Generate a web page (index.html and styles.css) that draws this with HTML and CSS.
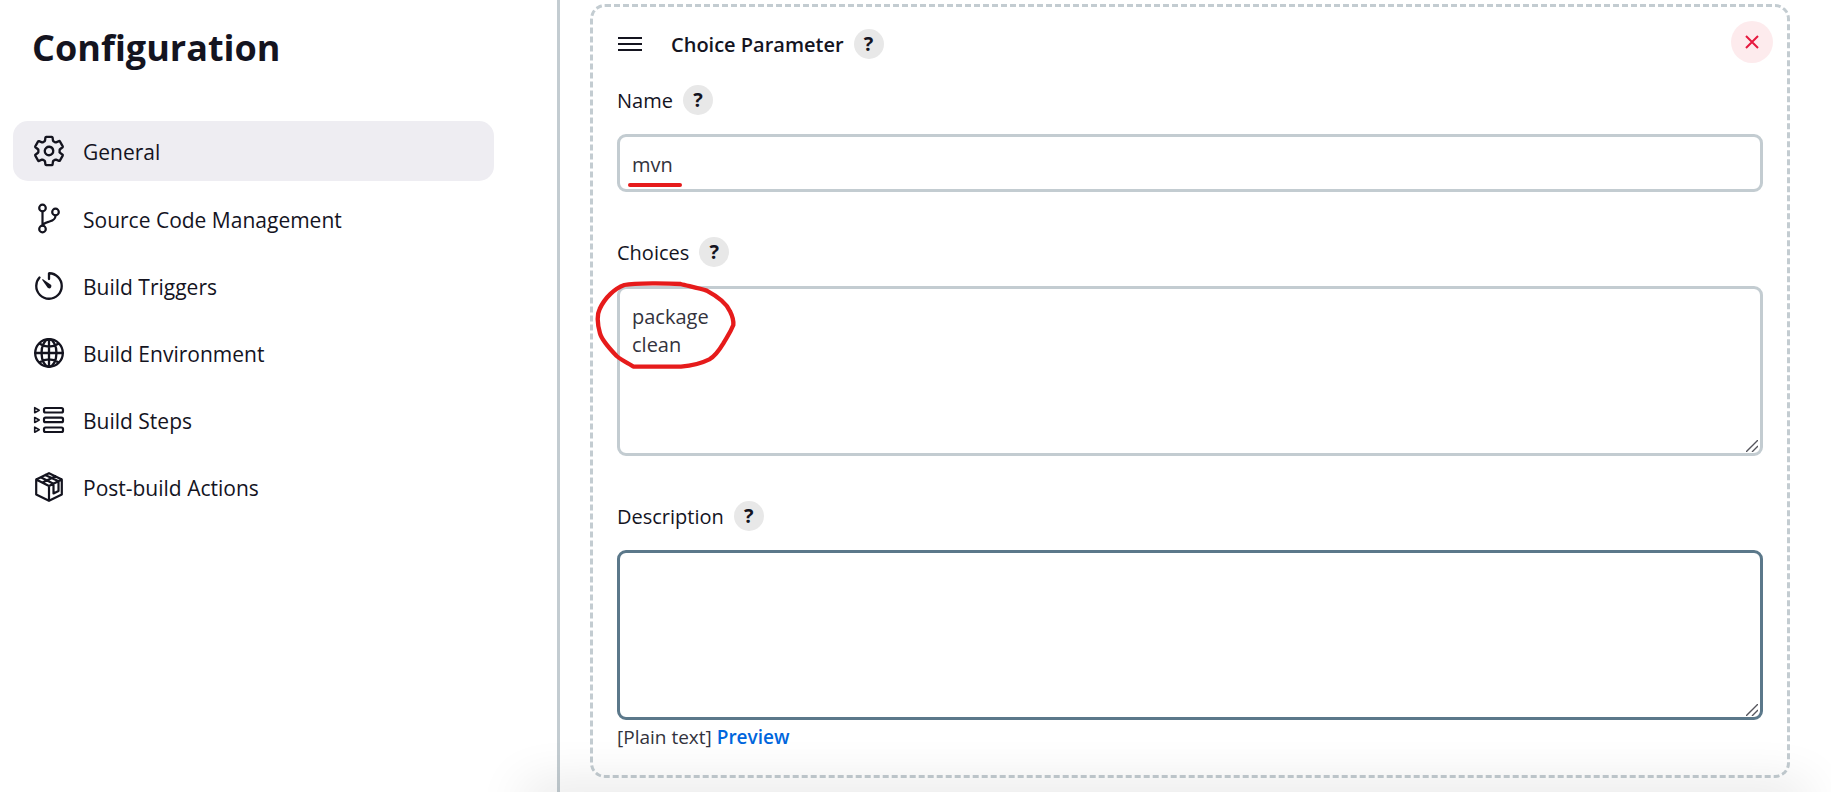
FILE: index.html
```html
<!DOCTYPE html>
<html lang="en">
<head>
<meta charset="utf-8">
<meta name="viewport" content="width=device-width, initial-scale=1">
<title>Configuration</title>
<link rel="stylesheet" href="styles.css">
</head>
<body>
<div class="page">
  <aside class="sidebar">
    <h1 class="sidebar-title">Configuration</h1>
    <nav class="tasks">
      <a class="task task-active" href="#general">
        <svg class="icon" viewBox="0 0 512 512" aria-hidden="true"><path d="M262.29 192.31a64 64 0 1057.4 57.4 64.13 64.13 0 00-57.4-57.4zM416.39 256a154.34 154.34 0 01-1.53 20.79l45.21 35.46a10.81 10.81 0 012.45 13.75l-42.77 74a10.81 10.81 0 01-13.14 4.59l-44.9-18.08a16.11 16.11 0 00-15.17 1.75A164.48 164.48 0 01325 400.8a15.94 15.94 0 00-8.82 12.14l-6.73 47.89a11.08 11.08 0 01-10.68 9.17h-85.54a11.11 11.11 0 01-10.69-8.87l-6.72-47.82a16.07 16.07 0 00-9-12.22 155.3 155.3 0 01-21.46-12.57 16 16 0 00-15.11-1.71l-44.89 18.07a10.81 10.81 0 01-13.14-4.58l-42.77-74a10.8 10.8 0 012.45-13.75l38.21-30a16.05 16.05 0 006-14.08c-.36-4.17-.58-8.33-.58-12.5s.21-8.27.58-12.35a16 16 0 00-6.07-13.94l-38.19-30A10.81 10.81 0 0149.48 186l42.77-74a10.81 10.81 0 0113.14-4.59l44.9 18.08a16.11 16.11 0 0015.17-1.75A164.48 164.48 0 01187 111.2a15.94 15.94 0 008.82-12.14l6.73-47.89A11.08 11.08 0 01213.23 42h85.54a11.11 11.11 0 0110.69 8.87l6.72 47.82a16.07 16.07 0 009 12.22 155.3 155.3 0 0121.46 12.57 16 16 0 0015.11 1.71l44.89-18.07a10.81 10.81 0 0113.14 4.58l42.77 74a10.8 10.8 0 01-2.45 13.75l-38.21 30a16.05 16.05 0 00-6.05 14.08c.33 4.14.55 8.3.55 12.47z"/></svg>
        <span>General</span>
      </a>
      <a class="task" href="#scm">
        <svg class="icon icon-34" viewBox="0 0 34 34" aria-hidden="true"><circle cx="10.5" cy="6" r="3.3"/><circle cx="10.5" cy="27" r="3.3"/><circle cx="23.5" cy="10" r="3.3"/><path d="M10.5 9.5v14M23.5 13.5c0 4-2.500 5-6 6-4 1.200-6.500 1.700-7 4"/></svg>
        <span>Source Code Management</span>
      </a>
      <a class="task" href="#triggers">
        <svg class="icon" viewBox="0 0 512 512" aria-hidden="true"><path d="M112.91 128A191.85 191.85 0 0064 254c-1.180 106.350 85.650 193.800 192 194 106.200.2 192-85.830 192-192 0-104.540-83.550-189.610-187.500-192a4.360 4.360 0 00-4.500 4.370V152"/><path class="solid" d="M233.38 278.63l-79-113a8.13 8.13 0 0111.32-11.32l113 79a32.5 32.5 0 01-37.25 53.26 33.21 33.21 0 01-8.07-7.94z"/></svg>
        <span>Build Triggers</span>
      </a>
      <a class="task" href="#environment">
        <svg class="icon" viewBox="0 0 512 512" aria-hidden="true"><circle cx="256" cy="256" r="208"/><path d="M256 48c-58.070 0-112.670 93.130-112.670 208S197.930 464 256 464s112.670-93.130 112.670-208S314.070 48 256 48zM117.330 117.330c38.240 27.150 86.380 43.340 138.670 43.340s100.430-16.190 138.670-43.340M394.670 394.670c-38.240-27.150-86.380-43.340-138.670-43.340s-100.430 16.190-138.670 43.340M256 48v416M464 256H48"/></svg>
        <span>Build Environment</span>
      </a>
      <a class="task" href="#steps">
        <svg class="icon icon-34" viewBox="0 0 34 34" aria-hidden="true"><rect x="12" y="5" width="19" height="4.500" rx="1.500"/><rect x="12" y="14.700" width="19" height="4.500" rx="1.500"/><rect x="12" y="24.500" width="19" height="4.500" rx="1.500"/><path class="thin" d="M2.700 4.700v5l4.500-2.500zM2.700 14.500v5l4.500-2.500zM2.700 24.200v5l4.500-2.500z"/></svg>
        <span>Build Steps</span>
      </a>
      <a class="task" href="#post-build">
        <svg class="icon icon-34" viewBox="0 0 34 34" aria-hidden="true"><path d="M17 3.200 29.800 9.500v15L17 30.800 4.200 24.500v-15zM4.200 9.500 17 16l12.800-6.500M17 16v14.800M8.700 7.300l12.800 6.500v9.700l5-2.500V11.200L13.300 5M10.500 12.500l13-6.300"/></svg>
        <span>Post-build Actions</span>
      </a>
    </nav>
  </aside>

  <main class="content">
    <section class="parameter">
      <header class="parameter-head">
        <button class="handle" type="button" aria-label="Reorder"><svg viewBox="0 0 24 14" aria-hidden="true"><path d="M0 1h24M0 7h24M0 13h24"/></svg></button>
        <h2 class="parameter-title">Choice Parameter</h2>
        <button class="help" type="button" aria-label="Help for Choice Parameter">?</button>
        <button class="delete" type="button" aria-label="Delete"><svg viewBox="0 0 14 14" aria-hidden="true"><path d="M1 1l12 12M13 1 1 13"/></svg></button>
      </header>

      <div class="field">
        <div class="field-head"><label for="name">Name</label><button class="help" type="button" aria-label="Help for Name">?</button></div>
        <div class="control">
          <input class="box" id="name" type="text" value="mvn">
          <svg class="mark mark-line" viewBox="0 0 56 6" aria-hidden="true"><path d="M3 3h50"/></svg>
        </div>
      </div>

      <div class="field">
        <div class="field-head"><label for="choices">Choices</label><button class="help" type="button" aria-label="Help for Choices">?</button></div>
        <div class="control">
          <textarea class="box area" id="choices">package
clean</textarea>
          <svg class="grip" viewBox="0 0 12 12" aria-hidden="true"><path d="M0 12 12 0M6 12l6-6"/></svg>
          <svg class="mark mark-ring" viewBox="36 168 450 300" aria-hidden="true"><path d="M160 440C150 432 125 422 110 408C90 387 66 362 60 340C53 315 50 285 59 267C75 232 105 205 133 195C165 188 270 190 302 192C325 198 360 205 380 212C410 228 440 250 450 274C458 290 461 302 460 315C450 340 440 352 430 370C418 390 402 410 388 418C360 432 325 438 303 440Z"/></svg>
        </div>
      </div>

      <div class="field">
        <div class="field-head"><label for="description">Description</label><button class="help" type="button" aria-label="Help for Description">?</button></div>
        <div class="control">
          <textarea class="box area area-focus" id="description"></textarea>
          <svg class="grip" viewBox="0 0 12 12" aria-hidden="true"><path d="M0 12 12 0M6 12l6-6"/></svg>
        </div>
        <p class="format">[Plain text] <a href="#preview">Preview</a></p>
      </div>
    </section>
    <div class="bottom-shade"></div>
  </main>
</div>
</body>
</html>
```
FILE: styles.css
```css
* { box-sizing: border-box; }

body {
  margin: 0;
  background: #fff;
  color: #14141f;
  font-family: "Open Sans", "Noto Sans", sans-serif;
  font-size: 20px;
  line-height: 28px;
}

.page {
  display: flex;
  min-height: 100vh;
  overflow: hidden;
}

.sidebar {
  flex: 0 0 560px;
  padding: 20px 63px 0 13px;
  border-right: 3px solid #c3ccd1;
}

.sidebar-title {
  margin: 0 0 45px;
  padding-left: 19px;
  font-size: 36px;
  line-height: 56px;
  font-weight: 700;
}

.tasks {
  display: flex;
  flex-direction: column;
  gap: 7px;
}

.task {
  display: flex;
  align-items: center;
  gap: 17px;
  height: 60px;
  padding: 0 19px;
  border-radius: 15px;
  color: inherit;
  font-size: 21px;
  text-decoration: none;
}

.task span,
.field-head label,
.parameter-title { padding-top: 2px; }

.task-active {
  margin-bottom: 1px;
  background: #eeedf2;
}

.icon {
  width: 34px;
  height: 34px;
  fill: none;
  stroke: currentColor;
  stroke-width: 35;
  stroke-linecap: round;
  stroke-linejoin: round;
}

.icon-34 { stroke-width: 2.2; }
.icon .solid { fill: currentColor; stroke: none; }
.icon .thin { stroke-width: 1.6; }

.content {
  position: relative;
  flex: 1;
  padding: 4px 41px 14px 30px;
}

.parameter {
  padding: 14px 24px 24px;
  border: 3px dashed #c3ccd1;
  border-radius: 15px;
}

.parameter-head {
  display: flex;
  align-items: center;
  height: 46px;
  margin-right: -10px;
}

button {
  padding: 0;
  border: 0;
  font: inherit;
  color: inherit;
}

.handle {
  width: 24px;
  height: 14px;
  margin: 0 29px 0 1px;
  background: none;
}

.handle svg,
.delete svg {
  display: block;
  fill: none;
  stroke: #14141f;
  stroke-width: 2;
}

.parameter-title {
  margin: 0 10px 0 0;
  font-size: 20px;
  line-height: 28px;
  font-weight: 600;
}

.help {
  width: 30px;
  height: 30px;
  border-radius: 50%;
  background: #e8e8e8;
  font-size: 20px;
  line-height: 28px;
  font-weight: 700;
}

.delete {
  display: grid;
  place-items: center;
  align-self: flex-start;
  width: 42px;
  height: 42px;
  margin-left: auto;
  border-radius: 50%;
  background: #fdebed;
}

.delete svg {
  width: 14px;
  height: 14px;
  stroke: #e6193f;
}

.field + .field { margin-top: 45px; }

.field-head {
  display: flex;
  align-items: center;
  gap: 10px;
  height: 30px;
  margin-bottom: 19px;
}

.parameter-head + .field { padding-top: 18px; }

.control {
  position: relative;
  display: flex;
}

.box {
  width: 100%;
  height: 58px;
  padding: 2px 12px 0;
  border: 3px solid #c3ccd1;
  border-radius: 9px;
  outline: 0;
  background: #fff;
  color: #33333d;
  font: inherit;
}

.area {
  height: 170px;
  padding: 14px 12px;
  resize: vertical;
}

.area::-webkit-resizer { background: transparent; }

.area-focus { border-color: #5b788a; }

.grip {
  position: absolute;
  right: 5px;
  bottom: 4px;
  width: 12px;
  height: 12px;
  fill: none;
  stroke: #55555c;
  stroke-width: 1.4;
  pointer-events: none;
}

.mark {
  position: absolute;
  overflow: visible;
  fill: none;
  stroke: #e61b1b;
  stroke-linecap: round;
  stroke-linejoin: round;
  pointer-events: none;
}

.mark-line {
  left: 10px;
  top: 48px;
  width: 56px;
  height: 6px;
  stroke-width: 4;
}

.mark-ring {
  left: -25px;
  top: -10px;
  width: 150px;
  height: 100px;
  stroke-width: 13;
}

.format {
  margin: 3px 0 0;
  color: #33333d;
  font-size: 19px;
}

.format a {
  color: #0066dd;
  font-weight: 600;
  text-decoration: none;
}

/* Shade cast upward by the button bar below the fold */
.bottom-shade {
  position: absolute;
  left: -30px;
  right: 30px;
  bottom: -20px;
  height: 20px;
  box-shadow: 0 0 50px 6px rgba(0, 0, 0, 0.12);
  pointer-events: none;
}
```
